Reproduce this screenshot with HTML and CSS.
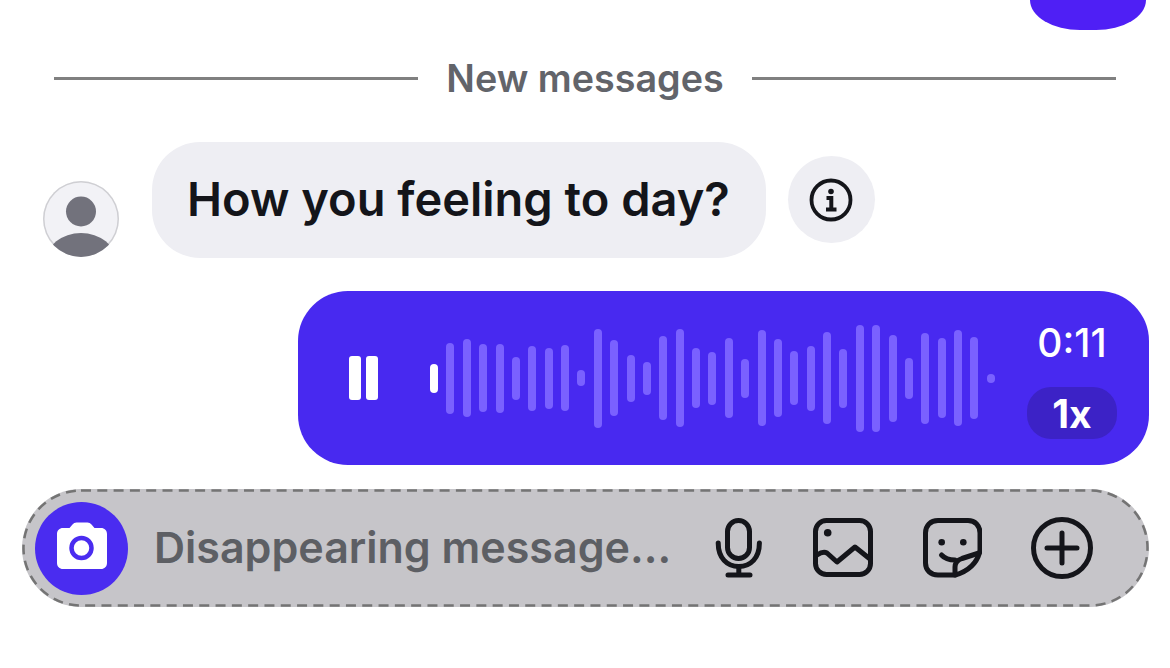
FILE: index.html
```html
<!DOCTYPE html>
<html lang="en">
<head>
  <meta charset="UTF-8">
  <meta name="viewport" content="width=device-width, initial-scale=1.0">
  <title>Chat</title>
  <link rel="stylesheet" href="styles.css">
</head>
<body>
  <div class="prev-row">
    <div class="prev-bubble"></div>
  </div>

  <div class="divider">
    <span class="divider-line"></span>
    <span class="divider-text">New messages</span>
    <span class="divider-line"></span>
  </div>

  <div class="incoming">
    <div class="avatar">
      <svg width="76" height="76" viewBox="0 0 76 76">
        <circle cx="38" cy="30.5" r="15" fill="#72727c"/>
        <ellipse cx="38" cy="80" rx="35" ry="28" fill="#72727c"/>
      </svg>
    </div>
    <div class="bubble">How you feeling to day?</div>
    <button class="info-btn">
      <svg width="44" height="44" viewBox="0 0 44 44" fill="none" stroke="#14151a">
        <circle cx="22" cy="22" r="19.5" stroke-width="3.8"/>
        <circle cx="22" cy="13.5" r="2.8" fill="#14151a" stroke="none"/>
        <path d="M17.5 20H22.3V31.5M17 31.5H27.5" stroke-width="4"/>
      </svg>
    </button>
  </div>

  <div class="outgoing">
    <div class="voice">
      <div class="pause"><span></span><span></span></div>
      <div class="wave">
        <span class="played" style="height:29px"></span>
        <span style="height:71px"></span>
        <span style="height:78px"></span>
        <span style="height:68px"></span>
        <span style="height:69px"></span>
        <span style="height:43px"></span>
        <span style="height:65px"></span>
        <span style="height:61px"></span>
        <span style="height:66px"></span>
        <span style="height:16px"></span>
        <span style="height:99px"></span>
        <span style="height:76px"></span>
        <span style="height:47px"></span>
        <span style="height:33px"></span>
        <span style="height:84px"></span>
        <span style="height:98px"></span>
        <span style="height:60px"></span>
        <span style="height:53px"></span>
        <span style="height:80px"></span>
        <span style="height:39px"></span>
        <span style="height:96px"></span>
        <span style="height:78px"></span>
        <span style="height:54px"></span>
        <span style="height:65px"></span>
        <span style="height:92px"></span>
        <span style="height:59px"></span>
        <span style="height:107px"></span>
        <span style="height:107px"></span>
        <span style="height:87px"></span>
        <span style="height:41px"></span>
        <span style="height:91px"></span>
        <span style="height:80px"></span>
        <span style="height:96px"></span>
        <span style="height:82px"></span>
        <span style="height:9px"></span>
      </div>
      <div class="voice-meta">
        <span class="voice-time">0:11</span>
        <span class="voice-speed">1x</span>
      </div>
    </div>
  </div>

  <div class="composer">
    <svg class="composer-border" width="1127" height="118" viewBox="0 0 1127 118" fill="none">
      <rect x="1.5" y="1.5" width="1124" height="115" rx="57.5" stroke="#747474" stroke-width="2.5" stroke-dasharray="10 6.3"/>
    </svg>
    <button class="camera-btn">
      <svg width="52" height="48" viewBox="0 0 52 48">
        <path d="M7 7H13.5L16.5 3.5C17.5 2.3 19 1.5 20.5 1.5H31.5C33 1.5 34.5 2.3 35.5 3.5L38.5 7H45C48.5 7 51 9.5 51 13V42C51 45.5 48.5 48 45 48H7C3.5 48 1 45.5 1 42V13C1 9.5 3.5 7 7 7Z" fill="#fff"/>
        <circle cx="25.5" cy="27" r="10" fill="none" stroke="#4a2cf0" stroke-width="4.5"/>
      </svg>
    </button>
    <span class="composer-text">Disappearing message...</span>
    <div class="composer-icons">
      <svg class="icon-mic" width="50" height="62" viewBox="0 0 50 62" fill="none" stroke="#14151a" stroke-width="5" stroke-linecap="round">
        <rect x="13.5" y="3.5" width="22" height="38" rx="11"/>
        <path d="M4.2 26C4.2 41 13 49.5 24.8 49.5S45.4 41 45.4 26"/>
        <path d="M24.8 49.5V58M14 58H36"/>
      </svg>
      <svg class="icon-image" width="60" height="60" viewBox="0 0 60 60" fill="none" stroke="#14151a" stroke-width="5" stroke-linecap="round" stroke-linejoin="round">
        <rect x="2.5" y="2.5" width="55" height="54" rx="11"/>
        <circle cx="14.7" cy="14.7" r="3.8" fill="#14151a" stroke="none"/>
        <path d="M4 37Q10 33 14 35L24 44L42 29L57 41"/>
      </svg>
      <svg class="icon-sticker" width="60" height="60" viewBox="0 0 60 60" fill="none" stroke="#14151a" stroke-width="5" stroke-linecap="round" stroke-linejoin="round">
        <path d="M58 33V15C58 7.5 53 2.5 46 2.5H16C8.5 2.5 3.5 7.5 3.5 15V45C3.5 52 8.5 57 16 57H33C47 53 55 45 58 33Z"/>
        <path d="M33 57V49Q33 43 40 40.5L57 35"/>
        <circle cx="19.7" cy="24.3" r="3.3" fill="#14151a" stroke="none"/>
        <circle cx="41.3" cy="24.3" r="3.3" fill="#14151a" stroke="none"/>
        <path d="M19.5 37Q24 42 33 42"/>
      </svg>
      <svg class="icon-plus" width="62" height="62" viewBox="0 0 62 62" fill="none" stroke="#14151a" stroke-width="5" stroke-linecap="round">
        <circle cx="31" cy="31" r="28.5"/>
        <path d="M16 31H46M31 16V46"/>
      </svg>
    </div>
  </div>
</body>
</html>
```

FILE: styles.css
```css
body {
  font-family: Inter, "Liberation Sans", sans-serif;
  background-color: #fff;
  color: #14151a;
  margin: 0;
  overflow: hidden;
}

button {
  border: none;
  padding: 0;
  cursor: pointer;
}

.prev-row {
  display: flex;
  justify-content: flex-end;
  padding-right: 24px;
}

.prev-bubble {
  width: 116px;
  height: 30px;
  background-color: #4f1ff5;
  border-radius: 0 0 50px 50px / 0 0 30px 30px;
}

.divider {
  display: flex;
  align-items: center;
  gap: 28px;
  height: 40px;
  margin: 28px 54px 0;
}

.divider-line {
  flex: 1;
  height: 3px;
  background-color: #808080;
}

.divider-text {
  font-size: 37.7px;
  font-weight: 600;
  color: #62646a;
}

.incoming {
  display: flex;
  align-items: flex-end;
  margin: 44px 0 0 43px;
}

.avatar {
  width: 76px;
  height: 76px;
  margin-bottom: 1px;
  border-radius: 50%;
  background-color: #f2f2f6;
  box-shadow: inset 0 0 0 1.5px #cfcfd3;
  overflow: hidden;
}

.avatar svg {
  display: block;
}

.bubble {
  margin-left: 33px;
  height: 113px;
  padding: 0 36px 3px 35px;
  display: flex;
  align-items: center;
  font-size: 47px;
  font-weight: 600;
  background-color: #eeeef3;
  border-radius: 48px;
}

.info-btn {
  width: 87px;
  height: 87px;
  margin: 0 0 15px 22px;
  display: flex;
  align-items: center;
  justify-content: center;
  background-color: #eeeef3;
  border-radius: 50%;
}

.outgoing {
  display: flex;
  justify-content: flex-end;
  padding-right: 21px;
  margin-top: 33px;
}

.voice {
  width: 851px;
  height: 174px;
  box-sizing: border-box;
  display: flex;
  align-items: center;
  padding: 0 32px 0 51px;
  background-color: #4829f0;
  border-radius: 50px;
}

.pause {
  display: flex;
  gap: 5px;
}

.pause span {
  width: 12px;
  height: 44px;
  background-color: #fff;
  border-radius: 3px;
}

.wave {
  display: flex;
  align-items: center;
  gap: 8.39px;
  margin-left: 52px;
}

.wave span {
  width: 8px;
  background-color: #7a61ff;
  border-radius: 4px;
}

.wave .played {
  background-color: #fff;
}

.voice-meta {
  margin-left: auto;
  width: 90px;
  padding-top: 4px;
  display: flex;
  flex-direction: column;
  align-items: center;
  gap: 22px;
  color: #fff;
}

.voice-time {
  font-size: 39px;
  font-weight: 500;
  line-height: 44px;
}

.voice-speed {
  width: 100%;
  height: 52px;
  display: flex;
  align-items: center;
  justify-content: center;
  font-size: 39px;
  font-weight: 700;
  background-color: #3c22c6;
  border-radius: 24px;
}

.composer {
  position: relative;
  height: 118px;
  margin: 24px 21px 0 22px;
  display: flex;
  align-items: center;
  padding-left: 13px;
  background-color: #c6c5c9;
  border-radius: 59px;
}

.composer-border {
  position: absolute;
  top: 0;
  left: 0;
}

.camera-btn {
  width: 93px;
  height: 93px;
  display: flex;
  align-items: center;
  justify-content: center;
  background-color: #4a2cf0;
  border-radius: 50%;
}

.camera-btn svg {
  margin-bottom: 7px;
}

.composer-text {
  margin: 0 0 3px 26px;
  font-size: 43px;
  font-weight: 600;
  color: #5d5f64;
}

.composer-icons {
  margin-left: auto;
  display: flex;
  align-items: center;
  margin-right: 56px;
}

.icon-image,
.icon-sticker,
.icon-plus {
  margin-left: 49px;
}
```
